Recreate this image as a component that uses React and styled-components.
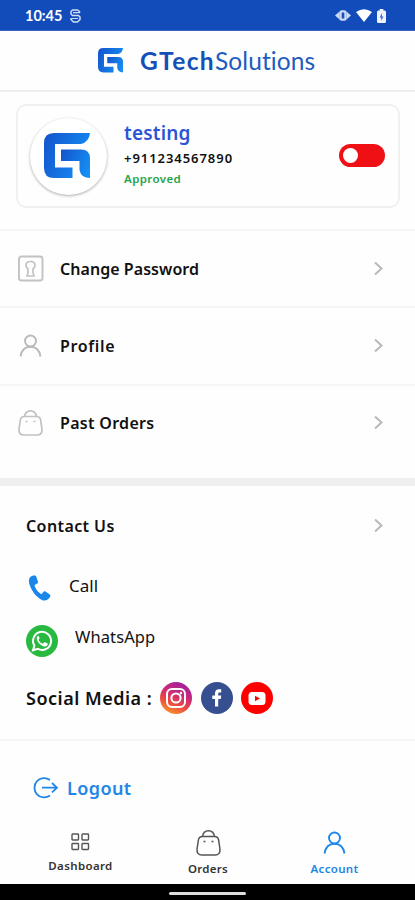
import React from "react";
import styled, { createGlobalStyle } from "styled-components";

const Global = createGlobalStyle`
  * { box-sizing: border-box; }
  body { margin: 0; background: #fff; font-family: "Noto Sans", "Open Sans", sans-serif; color: #111; }
`;

const Screen = styled.div`
  width: 415px;
  height: 900px;
  display: flex;
  flex-direction: column;
  background: #fefefe;
  overflow: hidden;
`;

const StatusBar = styled.div`
  height: 31px;
  flex: none;
  display: flex;
  align-items: center;
  justify-content: space-between;
  padding: 1px 29px 0 25px;
  background: #114cba;
  border-bottom: 1px solid #3e62c4;
`;

const StatusGroup = styled.div`
  display: flex;
  align-items: center;
  gap: ${(p) => p.$gap}px;
`;

const Label = styled.span`
  display: block;
  white-space: nowrap;
  font-family: ${(p) => p.$font || "inherit"};
  font-size: ${(p) => p.$size}px;
  line-height: ${(p) => p.$line || 20}px;
  font-weight: ${(p) => p.$weight || 600};
  letter-spacing: ${(p) => p.$track || 0}px;
  color: ${(p) => p.$color || "#111"};
`;

const Header = styled.header`
  height: 61px;
  flex: none;
  display: flex;
  align-items: center;
  padding-left: 98px;
  gap: 17px;
  border-bottom: 2px solid #ededed;
`;

const Brand = styled.div`
  display: flex;
`;

const ProfileCard = styled.section`
  height: 104px;
  flex: none;
  margin: 12px 15px 21px 16px;
  padding: 0 13px 0 12px;
  display: flex;
  align-items: center;
  border: 2px solid #f0f0f0;
  border-radius: 10px;
`;

const Avatar = styled.div`
  width: 77px;
  height: 77px;
  padding-right: 3px;
  display: grid;
  place-items: center;
  border-radius: 50%;
  background: #fff;
  box-shadow: 0 1px 3px rgba(0, 0, 0, 0.32);
`;

const Identity = styled.div`
  flex: 1;
  margin-left: 17px;
  padding-bottom: 4px;
  display: flex;
  flex-direction: column;
`;

const Toggle = styled.div`
  width: 46px;
  height: 23px;
  margin-top: -1px;
  padding: 4px;
  border-radius: 12px;
  background: #ee1014;
`;

const Knob = styled.div`
  width: 15px;
  height: 15px;
  border-radius: 50%;
  background: #fff;
`;

const Menu = styled.nav`
  height: 249px;
  flex: none;
`;

const MenuRow = styled.div`
  height: 77.3px;
  display: flex;
  align-items: center;
  padding: 0 30px 0 17px;
  border-top: 2px solid #f5f5f5;
`;

const MenuIcon = styled.div`
  width: 43px;
  display: flex;
`;

const MenuText = styled.div`
  flex: 1;
`;

const Band = styled.div`
  height: 8px;
  flex: none;
  background: #efefef;
`;

const Contact = styled.section`
  height: 255px;
  flex: none;
  padding-left: 26px;
  border-bottom: 2px solid #f6f6f6;
`;

const ContactHead = styled.div`
  height: 80px;
  display: flex;
  align-items: center;
  justify-content: space-between;
  padding-right: 30px;
`;

const ContactRow = styled.div`
  height: ${(p) => p.$height}px;
  display: flex;
  align-items: center;
  gap: ${(p) => p.$gap}px;
`;

const Lift = styled.div`
  padding-bottom: ${(p) => p.$by}px;
`;

const Socials = styled.div`
  display: flex;
  gap: 8.5px;
`;

const Logout = styled.div`
  height: 85px;
  flex: none;
  display: flex;
  align-items: center;
  padding: 8px 0 0 33px;
  gap: 8px;
`;

const TabBar = styled.nav`
  flex: 1;
  min-height: 0;
  display: grid;
  grid-template-columns: 145px 110px 143px;
  padding-left: 8px;
`;

const Tab = styled.div`
  display: flex;
  flex-direction: column;
  align-items: center;
  justify-content: flex-end;
  gap: ${(p) => p.$gap}px;
  padding-bottom: ${(p) => p.$bottom}px;
`;

const GestureBar = styled.div`
  height: 16px;
  flex: none;
  display: grid;
  place-items: center;
  background: #000;
`;

const Handle = styled.div`
  width: 77px;
  height: 3px;
  margin-top: 2px;
  border-radius: 2px;
  background: #ddd;
`;

const LogoG = ({ size, id }) => (
  <svg width={size} height={size} viewBox="0 0 46 46">
    <defs>
      <linearGradient id={id} x1="0" y1="0.3" x2="1" y2="0.7">
        <stop offset="0" stopColor="#1458cf" />
        <stop offset="1" stopColor="#1590f5" />
      </linearGradient>
    </defs>
    <g fill={`url(#${id})`}>
      <path d="M46 0H10Q0 0 0 10v25q0 10 10 10h18.500V34.500H11V11h26q8-2 9-11Z" />
      <path d="M17 16.500H37q9 0 9 9V45q-9 0-10.500-8V28H17Z" />
    </g>
  </svg>
);

const UserIcon = ({ color, width }) => (
  <svg width="27" height="26" viewBox="0 0 27 26" fill="none" stroke={color} strokeWidth={width}>
    <circle cx="13.500" cy="8" r="5.500" />
    <path d="M3.500 23.500C4.500 17 8 13.700 13.500 13.700S22.500 17 23.500 23.500" />
  </svg>
);

const BagIcon = ({ color, width }) => (
  <svg width="27" height="28" viewBox="0 0 27 28" fill="none" stroke={color} strokeWidth={width}>
    <path d="M7.500 7.500h12q3.500 0 4.100 3.500l1.300 8.500q.8 6.500-4.900 6.500H7q-5.700 0-4.900-6.500L3.400 11q.6-3.500 4.100-3.500Z" />
    <path d="M7.500 7.500Q8.500 1.800 13.500 1.800t6 5.700" />
    <path d="M8.500 12.500h2M16.500 12.500h2" />
  </svg>
);

const LockIcon = () => (
  <svg width="27" height="28" viewBox="0 0 27 28" fill="none" stroke="#c2c2c2" strokeWidth="1.900">
    <rect x="2" y="1.500" width="23.500" height="24" rx="2.500" />
    <path strokeWidth="1.700" d="M11 14q-2-1.500-2-3.700Q9 6.500 13.500 6.500T18 10.300q0 2.200-2 3.700v3.500l1 3.500h-7l1-3.500Z" />
  </svg>
);

const Chevron = () => (
  <svg width="12" height="16" viewBox="0 0 12 16" fill="none" stroke="#b9b9b9" strokeWidth="2">
    <path d="M2 1.500l6.500 6L2 13.500" />
  </svg>
);

const GridIcon = () => (
  <svg width="19" height="18" viewBox="0 0 19 18" fill="none" stroke="#555" strokeWidth="1.400">
    <rect x="1" y="1" width="6.500" height="6" rx=".7" />
    <rect x="11" y="1" width="6.500" height="6" rx=".7" />
    <rect x="1" y="10.500" width="6.500" height="6" rx=".7" />
    <rect x="11" y="10.500" width="6.500" height="6" rx=".7" />
  </svg>
);

const PhoneIcon = () => (
  <svg width="25" height="26" viewBox="-2 0 25 26" fill="#1b86ea">
    <path d="M4.500 .8C1 2 .2 5.500 1.500 9.500 4 17 9 22.500 14 25c3 1.500 6.500-.2 8.300-3.600.4-1-.1-1.700-.8-2.200l-4-2.700c-.8-.5-1.600-.3-2.200.4l-1.200 1.500c-.5.6-1.200.7-1.800.2-2.600-2-4.600-4.600-5.600-7.600-.2-.7 0-1.300.7-1.600L9.200 8.500c.8-.4 1-1.200.7-2L8.300 1.700C8 .8 7.200.2 4.500.8Z" />
  </svg>
);

const WhatsAppIcon = () => (
  <svg width="32" height="32" viewBox="0 0 32 32">
    <circle cx="16" cy="16" r="16" fill="#29b940" />
    <path fill="none" stroke="#fff" strokeWidth="2" d="M7 25.300l1.400-4.700A9 9 0 1 1 12 23.900Z" />
    <path fill="#fff" d="M12.300 10.800c-1.600.7-2 2.500-1.200 4.400 1.500 3.400 3.800 5.400 6.800 6.200 2 .5 3.700-.5 3.900-2.300 0-.4-.2-.6-.6-.8l-2.200-1c-.4-.2-.7-.1-1 .3l-.7.9c-.2.3-.5.3-.8.1-1.800-.8-3-2-3.800-3.400-.2-.3-.1-.6.100-.8l.6-.8c.2-.3.200-.5.100-.8l-.8-1.800c-.1-.3-.2-.3-.4-.3Z" />
  </svg>
);

const InstagramIcon = () => (
  <svg width="32" height="32" viewBox="0 0 32 32">
    <defs>
      <linearGradient id="insta" x1=".2" y1="1" x2=".65" y2="0">
        <stop offset="0" stopColor="#f9a02c" />
        <stop offset=".35" stopColor="#ec4b3f" />
        <stop offset=".65" stopColor="#cc2979" />
        <stop offset="1" stopColor="#a0219c" />
      </linearGradient>
    </defs>
    <circle cx="16" cy="16" r="16" fill="url(#insta)" />
    <g fill="none" stroke="#fff" strokeWidth="2">
      <rect x="7" y="7" width="18" height="18" rx="5" />
      <circle cx="16" cy="16" r="4.600" />
    </g>
    <circle cx="21" cy="11" r="1.200" fill="#fff" />
  </svg>
);

const FacebookIcon = () => (
  <svg width="32" height="32" viewBox="0 0 32 32">
    <circle cx="16" cy="16" r="16" fill="#354f91" />
    <path fill="#fff" d="M14 24.500V17h-2.700v-3.500H14v-2.300c0-2.700 1.600-4 4-4h2.200v3.200h-1.500c-1.200 0-1.500.6-1.500 1.500v1.600h3l-.4 3.500h-2.600v7.500Z" />
  </svg>
);

const YoutubeIcon = () => (
  <svg width="32" height="32" viewBox="0 0 32 32">
    <circle cx="16" cy="16" r="16" fill="#fe0000" />
    <rect x="7.500" y="10" width="17" height="13" rx="3.500" fill="#fff" />
    <path d="M14 13.800l5 2.700-5 2.700Z" fill="#fe0000" />
  </svg>
);

const LogoutIcon = () => (
  <svg width="26" height="24" viewBox="0 0 26 24" fill="none" stroke="#2186e6" strokeWidth="1.800">
    <path d="M17 4A9.700 9.700 0 1 0 17 19.500" />
    <path d="M9 11.700h15M19 7l5 4.700-5 4.700" />
  </svg>
);

const ShieldIcon = () => (
  <svg width="11" height="14" viewBox="0 0 11 14" fill="none" stroke="#cfdcf6" strokeWidth="1.500">
    <path d="M9.500 4V2.500L7.500 1h-5L1 2.500V5l1.500 1.500h6L10 8v2.500L7.500 13h-4L1 10.500V9" />
    <path d="M3 3.700h6.500M1.500 9.500H8" strokeWidth="1.200" />
  </svg>
);

const VibrateIcon = () => (
  <svg width="16" height="13" viewBox="0 0 16 13">
    <path d="M0 6.500L4.500 2.500v8ZM16 6.500L11.500 2.500v8Z" fill="#cbd9f4" />
    <rect x="4.300" y="1.200" width="7.400" height="10.600" rx="2.500" fill="#cbd9f4" />
    <rect x="6.700" y="3.500" width="2.600" height="6" rx=".5" fill="#174fba" />
  </svg>
);

const WifiIcon = () => (
  <svg width="16" height="13" viewBox="0 0 16 13">
    <path d="M0 3Q8-2.500 16 3L8 13Z" fill="#fff" />
  </svg>
);

const BatteryIcon = () => (
  <svg width="9" height="14" viewBox="0 0 10 14" preserveAspectRatio="none">
    <path d="M3 0h4v1.500h1.500Q10 1.500 10 3v9.500Q10 14 8.500 14h-7Q0 14 0 12.500V3q0-1.500 1.500-1.500H3Z" fill="#eef3fd" />
    <path d="M5.500 4L3 8.500h1.700V12L7.200 7.500H5.500Z" fill="#3f6bc6" />
  </svg>
);

const MENU = [
  { text: "Change Password", icon: <LockIcon />, track: 0.05 },
  { text: "Profile", icon: <UserIcon color="#b9b9b9" width={1.9} />, track: 0.65 },
  { text: "Past Orders", icon: <BagIcon color="#c2c2c2" width={1.7} />, track: 0.3 },
];

export default function App() {
  return (
    <>
      <Global />
      <Screen>
        <StatusBar>
          <StatusGroup $gap={8}>
            <Label $font="Lato, sans-serif" $size={14.5} $weight={700} $color="#fff">10:45</Label>
            <ShieldIcon />
          </StatusGroup>
          <StatusGroup $gap={5}>
            <VibrateIcon />
            <WifiIcon />
            <BatteryIcon />
          </StatusGroup>
        </StatusBar>
        <Header>
          <LogoG size={25} id="brand" />
          <Brand>
            <Label $font="Lato, sans-serif" $size={24.5} $line={28} $weight={700} $track={1.35} $color="#1450b8">GTech</Label>
            <Label $font="Lato, sans-serif" $size={24.5} $line={28} $weight={400} $track={0.1} $color="#1e5cbf">Solutions</Label>
          </Brand>
        </Header>
        <ProfileCard>
          <Avatar><LogoG size={46} id="avatar" /></Avatar>
          <Identity>
            <Label $size={19} $line={26} $track={0.2} $color="#2a55d6">testing</Label>
            <Label $size={13} $line={24} $track={0.95}>+911234567890</Label>
            <Label $size={11.5} $line={18} $track={0.4} $color="#23a34c">Approved</Label>
          </Identity>
          <Toggle><Knob /></Toggle>
        </ProfileCard>
        <Menu>
          {MENU.map((m) => (
            <MenuRow key={m.text}>
              <MenuIcon>{m.icon}</MenuIcon>
              <MenuText><Label $size={16} $track={m.track}>{m.text}</Label></MenuText>
              <Chevron />
            </MenuRow>
          ))}
        </Menu>
        <Band />
        <Contact>
          <ContactHead>
            <Label $size={16} $track={0.4}>Contact Us</Label>
            <Chevron />
          </ContactHead>
          <ContactRow $height={43} $gap={18}>
            <PhoneIcon />
            <Lift $by={4}><Label $size={17} $weight={400}>Call</Label></Lift>
          </ContactRow>
          <ContactRow $height={64} $gap={17}>
            <WhatsAppIcon />
            <Lift $by={9}><Label $size={16.5} $weight={400} $track={0.1}>WhatsApp</Label></Lift>
          </ContactRow>
          <ContactRow $height={50} $gap={8}>
            <Label $size={18} $track={0.5}>Social Media :</Label>
            <Socials>
              <InstagramIcon />
              <FacebookIcon />
              <YoutubeIcon />
            </Socials>
          </ContactRow>
        </Contact>
        <Logout>
          <LogoutIcon />
          <Label $size={18} $track={0.4} $color="#2186e6">Logout</Label>
        </Logout>
        <TabBar>
          <Tab $gap={5} $bottom={8}>
            <GridIcon />
            <Label $size={11.5} $track={0.35} $color="#333">Dashboard</Label>
          </Tab>
          <Tab $gap={2} $bottom={5}>
            <BagIcon color="#555" width={1.5} />
            <Label $size={11.5} $track={0.3} $color="#333">Orders</Label>
          </Tab>
          <Tab $gap={3} $bottom={5}>
            <UserIcon color="#2186e6" width={1.9} />
            <Label $size={11.5} $track={0.3} $color="#2186e6">Account</Label>
          </Tab>
        </TabBar>
        <GestureBar><Handle /></GestureBar>
      </Screen>
    </>
  );
}
